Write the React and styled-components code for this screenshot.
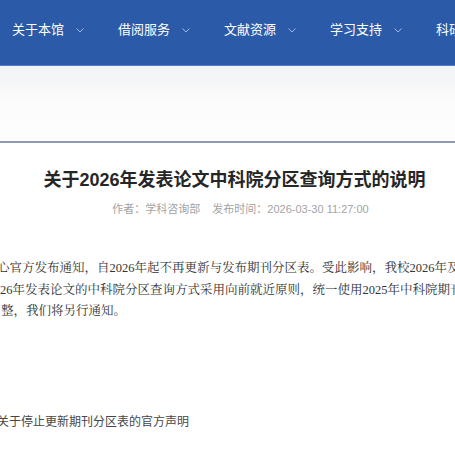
import styled, { createGlobalStyle } from "styled-components";

const GlobalStyle = createGlobalStyle`
  html, body {
    margin: 0;
    padding: 0;
    background: #ffffff;
    overflow-x: hidden;
  }
  body {
    font-family: "Liberation Sans", "Noto Sans CJK SC", sans-serif;
  }
`;

const Page = styled.div`
  width: 455px;
  overflow: hidden;
`;

const NavBar = styled.nav`
  height: 66px;
  background: #2b5aa8;
  border-bottom: 1px solid #4f7fc6;
  display: flex;
  align-items: flex-start;
  gap: 34px;
  padding: 20px 0 0 12px;
  box-sizing: border-box;
  white-space: nowrap;
`;

const NavItem = styled.div`
  display: flex;
  align-items: center;
  gap: 12px;
  color: #ffffff;
  font-family: "Noto Sans CJK SC", sans-serif;
  font-size: 13px;
  line-height: 18px;
  flex-shrink: 0;
`;

const Chevron = styled.svg`
  width: 8px;
  height: 5px;
  margin-top: 2px;
`;

const SubBand = styled.div`
  height: 75px;
  background: linear-gradient(
    to bottom,
    #f2f5f9 0px,
    #f4f5f7 14px,
    #fbfbfb 34px,
    #fefefe 75px
  );
  border-bottom: 2px solid #8d9bb0;
`;

const Article = styled.article`
  padding: 23px 0 40px;
`;

const Header = styled.header`
  margin-left: 14px;
  text-align: center;
`;

const Title = styled.h1`
  margin: 0;
  font-family: "Liberation Sans", "Noto Sans CJK SC", sans-serif;
  font-size: 18px;
  line-height: 28px;
  font-weight: 700;
  color: #262626;
  white-space: nowrap;
`;

const Meta = styled.div`
  margin-top: 6px;
  margin-left: 12px;
  font-family: "Liberation Sans", "Noto Sans CJK SC", sans-serif;
  font-size: 11px;
  line-height: 18px;
  color: #a3a3a3;
  white-space: nowrap;
`;

const MetaGap = styled.span`
  display: inline-block;
  width: 12px;
`;

const Body = styled.div`
  margin-top: 40px;
  font-family: "Liberation Serif", "Noto Serif CJK SC", "Noto Sans CJK SC", serif;
  font-size: 12.5px;
  line-height: 21.5px;
  color: #333333;
`;

const Line = styled.div`
  white-space: nowrap;
  margin-left: ${(p) => p.$shift || 0}px;
`;

const AttachLink = styled.a`
  display: block;
  margin-top: 89px;
  margin-left: -3px;
  font-family: "Liberation Sans", "Noto Sans CJK SC", sans-serif;
  font-size: 12px;
  line-height: 20px;
  color: #474747;
  text-decoration: none;
  white-space: nowrap;
`;

const navItems = ["关于本馆", "借阅服务", "文献资源", "学习支持", "科研支持"];

function ChevronIcon() {
  return (
    <Chevron viewBox="0 0 8 5" fill="none">
      <path d="M0.5 0.5 L4 4 L7.5 0.5" stroke="#9fb8e2" strokeWidth="1" />
    </Chevron>
  );
}

export default function App() {
  return (
    <Page>
      <GlobalStyle />
      <NavBar>
        {navItems.map((item) => (
          <NavItem key={item}>
            {item}
            <ChevronIcon />
          </NavItem>
        ))}
      </NavBar>
      <SubBand />
      <Article>
        <Header>
          <Title>关于2026年发表论文中科院分区查询方式的说明</Title>
          <Meta>
            作者：学科咨询部
            <MetaGap />
            发布时间：2026-03-30 11:27:00
          </Meta>
        </Header>
        <Body>
          <Line $shift={-3}>
            心官方发布通知，自2026年起不再更新与发布期刊分区表。受此影响，我校2026年及以后
          </Line>
          <Line>
            26年发表论文的中科院分区查询方式采用向前就近原则，统一使用2025年中科院期刊分区表
          </Line>
          <Line $shift={1}>整，我们将另行通知。</Line>
        </Body>
        <AttachLink href="#">关于停止更新期刊分区表的官方声明</AttachLink>
      </Article>
    </Page>
  );
}
